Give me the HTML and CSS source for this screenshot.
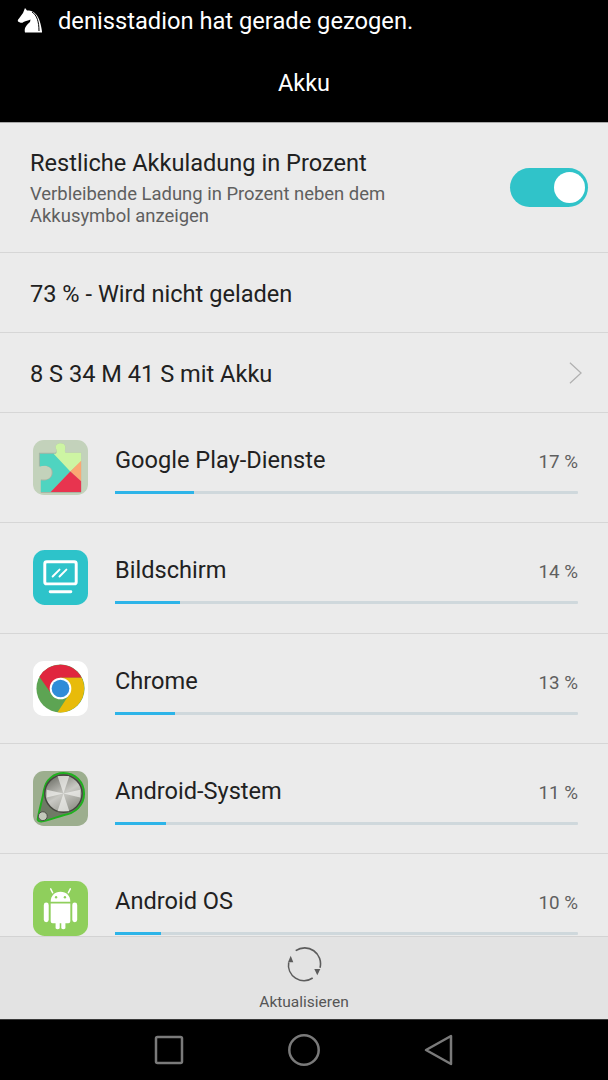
FILE: index.html
```html
<!DOCTYPE html>
<html lang="de">
<head>
    <meta charset="UTF-8">
    <title>Akku</title>
    <link rel="stylesheet" href="styles.css">
</head>
<body>

<!-- Header -->
<header class="top">
    <div class="notice">
        <svg class="knight" viewBox="0 0 26 26">
            <path d="M8 1 L10 3.5 C16 3 23 7 25 24.5 L25 25.500 L8 25.500 C7 21 9 18.500 13 15 L13.500 12.500 C11 14 9 13.500 6.500 15 C5.500 16 4 16 3 15.500 L1 14.500 C0.500 13.500 1 12.500 2 11.500 L6 6 Z" fill="#fff"/>
            <path d="M15 5 C20 8 22 15 22 24" stroke="#000" stroke-width="1" fill="none"/>
        </svg>
        <span>denisstadion hat gerade gezogen.</span>
    </div>
    <h1 class="title">Akku</h1>
</header>

<main class="content">
    <!-- Settings rows -->
    <section class="row row-toggle">
        <div class="toggle-text">
            <div class="row-title">Restliche Akkuladung in Prozent</div>
            <div class="row-sub">Verbleibende Ladung in Prozent neben dem Akkusymbol anzeigen</div>
        </div>
        <div class="switch"><div class="knob"></div></div>
    </section>

    <section class="row row-plain">
        <div class="row-title">73 % - Wird nicht geladen</div>
    </section>

    <section class="row row-plain row-link">
        <div class="row-title">8 S 34 M 41 S mit Akku</div>
        <svg class="chevron" viewBox="0 0 14 24"><path d="M1 1 L13 12 L1 23" fill="none" stroke="#b0b0b0" stroke-width="1.300"/></svg>
    </section>

    <!-- App usage -->
    <section class="row app">
        <svg class="app-icon" viewBox="0 0 56 56">
            <rect width="56" height="56" rx="11" fill="#c3d2bb"/>
            <path d="M6 13 H22 C25 13 24 10 23 8 C22 3 32 1 33 7 C33 10 31 13 35 13 H49 V54 H8 V40 C14 41 19 39 19 33 C19 27 13 25 6 27 Z" fill="#a9b4a4"/>
            <path d="M7 14 H28 L38 32 L18 53 H8 V41 C14 42 20 39 20 33 C20 27 13 25 7 27 Z" fill="#4fd4c0"/>
            <path d="M21 14 H23 C25 13 24 10 23 8 C22 3 32 1 33 7 C33 10 31 13 35 13 H49 V22 L38 32 Z" fill="#cdf5a3"/>
            <path d="M49 21 V42 L38 32 Z" fill="#fba873"/>
            <path d="M38 32 L49 42 V53 H18 Z" fill="#e8344f"/>
        </svg>
        <div class="app-main">
            <div class="app-head"><span class="app-name">Google Play-Dienste</span><span class="app-pct">17 %</span></div>
            <div class="bar"><div class="bar-fill" style="width: 17%"></div></div>
        </div>
    </section>

    <section class="row app">
        <svg class="app-icon" viewBox="0 0 56 56">
            <rect width="56" height="56" rx="12" fill="#2dc3ca"/>
            <rect x="12" y="12" width="32" height="22.500" rx="2" fill="none" stroke="#fff" stroke-width="3"/>
            <path d="M20 27 L27 20 M27 27 L34 20" stroke="#fff" stroke-width="2" stroke-linecap="round"/>
            <rect x="16" y="41" width="24" height="3" rx="1.500" fill="#fff"/>
        </svg>
        <div class="app-main">
            <div class="app-head"><span class="app-name">Bildschirm</span><span class="app-pct">14 %</span></div>
            <div class="bar"><div class="bar-fill" style="width: 14%"></div></div>
        </div>
    </section>

    <section class="row app">
        <svg class="app-icon" viewBox="0 0 56 56">
            <rect width="56" height="56" rx="11" fill="#fff"/>
            <circle cx="28" cy="28" r="24.500" fill="#5da453"/>
            <path d="M28 17 H49.500 A24.500 24.500 0 0 0 6.500 16 L18.500 33 Z" fill="#e0263e"/>
            <path d="M28 17 H49.500 A24.500 24.500 0 0 1 25 52.300 L37.500 33 Z" fill="#e8bb0a"/>
            <circle cx="28" cy="28" r="11" fill="#fff"/>
            <circle cx="28" cy="28" r="9" fill="#2f8cd8"/>
        </svg>
        <div class="app-main">
            <div class="app-head"><span class="app-name">Chrome</span><span class="app-pct">13 %</span></div>
            <div class="bar"><div class="bar-fill" style="width: 13%"></div></div>
        </div>
    </section>

    <section class="row app">
        <svg class="app-icon" viewBox="0 0 56 56">
            <defs>
                <linearGradient id="metal" x1="0.2" y1="0" x2="0.8" y2="1">
                    <stop offset="0" stop-color="#6b6c64"/>
                    <stop offset="0.5" stop-color="#c9c9c4"/>
                    <stop offset="1" stop-color="#8a8b82"/>
                </linearGradient>
            </defs>
            <rect width="56" height="56" rx="11" fill="#9cae8e"/>
            <path d="M5 48 C6 40 10 28 11 20 C13 8 22 2 31 2 C43 2 52 11 52 23 C52 35 43 43 31 45 C24 47 17 50 11 51 C7 52 4 51 5 48 Z" fill="#6f7a66" stroke="#1fb01f" stroke-width="2"/>
            <circle cx="31" cy="23" r="19" fill="url(#metal)" stroke="#45463f" stroke-width="1.500"/>
            <path d="M31 23 L25 5 H37 Z M31 23 L25 41 H37 Z M31 23 L14 19 V27 Z M31 23 L48 19 V27 Z" fill="#f1f1ee" opacity="0.7"/>
            <circle cx="10" cy="46" r="4.500" fill="#c3c8bb" stroke="#4a4b44" stroke-width="1"/>
        </svg>
        <div class="app-main">
            <div class="app-head"><span class="app-name">Android-System</span><span class="app-pct">11 %</span></div>
            <div class="bar"><div class="bar-fill" style="width: 11%"></div></div>
        </div>
    </section>

    <section class="row app">
        <svg class="app-icon" viewBox="0 0 56 56">
            <rect width="56" height="56" rx="12" fill="#8fcf5c"/>
            <path d="M18 21 C18 15 22 11 28 11 C34 11 38 15 38 21 Z" fill="#fff"/>
            <path d="M20 12 L18 8 M36 12 L38 8" stroke="#fff" stroke-width="1.500" stroke-linecap="round"/>
            <circle cx="23.500" cy="16.500" r="1.200" fill="#8fcf5c"/>
            <circle cx="32.500" cy="16.500" r="1.200" fill="#8fcf5c"/>
            <path d="M18 23 H38 V41 A2 2 0 0 1 36 43 H33 V48 A2.500 2.500 0 0 1 28.800 48 V43 H27.200 V48 A2.500 2.500 0 0 1 23 48 V43 H20 A2 2 0 0 1 18 41 Z" fill="#fff"/>
            <rect x="11" y="22" width="5" height="20" rx="2.500" fill="#fff"/>
            <rect x="40" y="22" width="5" height="20" rx="2.500" fill="#fff"/>
        </svg>
        <div class="app-main">
            <div class="app-head"><span class="app-name">Android OS</span><span class="app-pct">10 %</span></div>
            <div class="bar"><div class="bar-fill" style="width: 10%"></div></div>
        </div>
    </section>
</main>

<!-- Refresh action -->
<footer class="actions">
    <svg class="refresh" viewBox="0 0 36 36">
        <path d="M2.700 15.300 A15.600 15.600 0 0 0 26.700 31" fill="none" stroke="#5c5c5c" stroke-width="1.600"/>
        <path d="M9.700 3.700 A15.800 15.800 0 0 1 34 20.700" fill="none" stroke="#5c5c5c" stroke-width="1.600"/>
        <path d="M4.700 8.700 L2 15.300 H7.300 Z" fill="#5c5c5c"/>
        <path d="M28.300 22 H34.300 L31.300 28.300 Z" fill="#5c5c5c"/>
    </svg>
    <div class="action-label">Aktualisieren</div>
</footer>

<!-- Navigation bar -->
<nav class="navbar">
    <svg class="nav-icon" viewBox="0 0 30 32"><rect x="2" y="3" width="26" height="26" rx="1.500" fill="none" stroke="#7a7a7a" stroke-width="2.500"/></svg>
    <svg class="nav-icon nav-home" viewBox="0 0 32 32"><circle cx="16" cy="16" r="14.700" fill="none" stroke="#7a7a7a" stroke-width="2.500"/></svg>
    <svg class="nav-icon" viewBox="0 0 30 32"><path d="M2 16 L27 2 V30 Z" fill="none" stroke="#7a7a7a" stroke-width="2.500" stroke-linejoin="round"/></svg>
</nav>

</body>
</html>
```

FILE: styles.css
```css
html, body {
    height: 100%;
    margin: 0;
    padding: 0;
}

body {
    display: flex;
    flex-direction: column;
    height: 1080px;
    overflow: hidden;
    background-color: #ebebeb;
    font-family: Roboto, "Noto Sans", sans-serif;
    color: #212121;
}

/* Header */
.top {
    background: #000;
    color: #fff;
    height: 122px;
    border-bottom: 1px solid #a8a8a8;
    flex-shrink: 0;
}

.notice {
    display: flex;
    align-items: center;
    height: 42px;
    padding-left: 17px;
    font-size: 23.700px;
}

.knight {
    width: 26px;
    height: 26px;
    margin-right: 15px;
    margin-top: -3px;
}

.title {
    margin: 0;
    padding-top: 27px;
    font-size: 23.500px;
    line-height: 28px;
    font-weight: 400;
    text-align: center;
}

/* Rows */
.content {
    flex: 1;
    min-height: 0;
    overflow: hidden;
}

.row {
    display: flex;
    align-items: center;
    border-bottom: 1px solid #d6d6d6;
    padding: 0 20px 0 30px;
}

.row-toggle {
    height: 129px;
}

.toggle-text {
    flex: 1;
}

.row-title {
    font-size: 23.600px;
    line-height: 30px;
}

.row-plain .row-title {
    margin-top: 2px;
}

.row-sub {
    width: 400px;
    margin-top: 5px;
    font-size: 18.450px;
    line-height: 22px;
    color: #5f5f5f;
}

.switch {
    width: 78px;
    height: 39px;
    border-radius: 20px;
    background: #30c3c9;
    display: flex;
    justify-content: flex-end;
    align-items: center;
    padding-right: 3px;
    box-sizing: border-box;
}

.knob {
    width: 31px;
    height: 31px;
    border-radius: 50%;
    background: #fff;
}

.row-plain {
    height: 79px;
}

.row-link {
    justify-content: space-between;
    padding-right: 26px;
}

.chevron {
    width: 13px;
    height: 24px;
}

/* App usage */
.app {
    height: 109.250px;
    padding: 0 30px 0 33px;
    align-items: flex-start;
}

.app-icon {
    width: 55px;
    height: 55px;
    margin-top: 27px;
    flex-shrink: 0;
}

.app-main {
    flex: 1;
    margin-left: 27px;
    padding-top: 31px;
}

.app-head {
    display: flex;
    justify-content: space-between;
    align-items: center;
    height: 32px;
}

.app-name {
    font-size: 23.600px;
}

.app-pct {
    font-size: 18.800px;
    color: #5f5f5f;
    margin-top: 4px;
}

.bar {
    height: 3px;
    margin-top: 15px;
    background: #cfd8dc;
    border-radius: 1px;
}

.bar-fill {
    height: 3px;
    background: #2db4e8;
}

/* Footer */
.actions {
    flex-shrink: 0;
    height: 82px;
    background: #e3e3e3;
    border-top: 1px solid #d3d3d3;
    text-align: center;
}

.refresh {
    display: block;
    width: 36px;
    height: 36px;
    margin: 10px auto 0;
}

.action-label {
    margin-top: 10px;
    font-size: 15.500px;
    line-height: 18px;
    color: #555;
}

.navbar {
    flex-shrink: 0;
    height: 61px;
    background: #000;
    display: flex;
    align-items: center;
    justify-content: center;
    gap: 105px;
    border-top: 1px solid #3a3a3a;
    box-sizing: border-box;
}

.nav-icon {
    width: 30px;
    height: 32px;
}

.nav-home {
    width: 32px;
    margin: 0 -1px;
}
```
